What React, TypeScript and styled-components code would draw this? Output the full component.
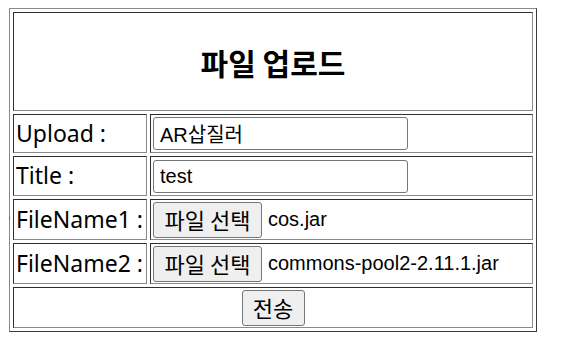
import React from "react";
import styled, { createGlobalStyle } from "styled-components";

const Global = createGlobalStyle`
  html, body { background: #ffffff; }
  body {
    margin: 8px 0 0 9px;
    font-family: "Liberation Sans", "Noto Sans CJK KR", sans-serif;
    color: #000;
  }
`;

const Page = styled.div`
  position: relative;
  width: 528px;
`;

const Marker = styled.span`
  position: absolute;
  left: -3px;
  top: 208px;
  width: 4px;
  height: 4px;
  border-radius: 50%;
  background: #e0242c;
`;

const Table = styled.table`
  box-sizing: border-box;
  width: 528px;
  border-collapse: separate;
  border-spacing: 3px;
  border: 1px solid;
  border-color: #8a8a8a #3a3a3a #3a3a3a #8a8a8a;
`;

const Cell = styled.td<{ $h: number; $w?: number; $center?: boolean }>`
  box-sizing: border-box;
  height: ${(p) => p.$h}px;
  ${(p) => (p.$w ? `width: ${p.$w}px;` : "")}
  padding: 0 2px;
  border: 1px solid;
  border-color: #2e2e2e #8a8a8a #8a8a8a #2e2e2e;
  vertical-align: middle;
  text-align: ${(p) => (p.$center ? "center" : "left")};
  white-space: nowrap;
`;

const Heading = styled.span`
  font-family: "Noto Sans CJK KR", sans-serif;
  font-weight: 700;
  font-size: 30px;
  line-height: 1;
  position: relative;
  top: 1px;
`;

const Label = styled.span`
  font-family: "Noto Sans", "Noto Sans CJK KR", sans-serif;
  font-size: 23px;
  line-height: 1;
`;

const TextBox = styled.input`
  box-sizing: border-box;
  width: 255px;
  height: 33px;
  margin: 0;
  padding: 0 6px;
  border: 1px solid #767676;
  border-radius: 3px;
  background: #fff;
  font-family: "Liberation Sans", "Noto Sans CJK KR", sans-serif;
  font-size: 20px;
  color: #000;
  vertical-align: middle;
  outline: none;
`;

const FileRow = styled.div`
  display: flex;
  align-items: center;
  gap: 6px;
`;

const Button = styled.button<{ $w: number }>`
  box-sizing: border-box;
  width: ${(p) => p.$w}px;
  height: 36px;
  margin: 0;
  padding: 0 0 2px;
  border: 1px solid #767676;
  border-radius: 3px;
  background: #efefef;
  font-family: "Noto Sans CJK KR", sans-serif;
  font-size: 22px;
  color: #000;
  line-height: 1;
  vertical-align: middle;
`;

const FileName = styled.span`
  font-family: "Liberation Sans", sans-serif;
  font-size: 20px;
`;

export default function App() {
  return (
    <>
      <Global />
      <Page>
        <Marker />
        <Table>
          <tbody>
            <tr>
              <Cell $h={99} colSpan={2} $center>
                <Heading>파일 업로드</Heading>
              </Cell>
            </tr>
            <tr>
              <Cell $h={39} $w={134}>
                <Label>Upload :</Label>
              </Cell>
              <Cell $h={39}>
                <TextBox type="text" defaultValue="AR삽질러" />
              </Cell>
            </tr>
            <tr>
              <Cell $h={40} $w={134}>
                <Label>Title :</Label>
              </Cell>
              <Cell $h={40}>
                <TextBox type="text" defaultValue="test" />
              </Cell>
            </tr>
            <tr>
              <Cell $h={41} $w={134}>
                <Label>FileName1 :</Label>
              </Cell>
              <Cell $h={41}>
                <FileRow>
                  <Button $w={109}>파일 선택</Button>
                  <FileName>cos.jar</FileName>
                </FileRow>
              </Cell>
            </tr>
            <tr>
              <Cell $h={41} $w={134}>
                <Label>FileName2 :</Label>
              </Cell>
              <Cell $h={41}>
                <FileRow>
                  <Button $w={109}>파일 선택</Button>
                  <FileName>commons-pool2-2.11.1.jar</FileName>
                </FileRow>
              </Cell>
            </tr>
            <tr>
              <Cell $h={41} colSpan={2} $center>
                <Button $w={63}>전송</Button>
              </Cell>
            </tr>
          </tbody>
        </Table>
      </Page>
    </>
  );
}
